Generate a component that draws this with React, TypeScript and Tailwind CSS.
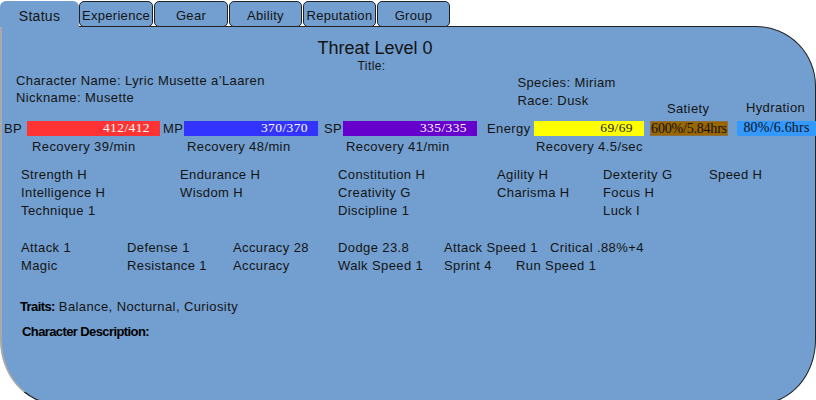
import React from "react";

function Tab({ label, w, ml }: { label: string; w: string; ml: string }) {
  return (
    <div
      className={`${w} ${ml} h-[26px] rounded-[5px] border border-[#222] bg-[#729fcf] pt-[6px] text-center text-[13px] leading-[16px] tracking-[0.3px]`}
    >
      {label}
    </div>
  );
}

function Bar({
  w,
  bg,
  text,
  color,
  align,
  extra,
}: {
  w: string;
  bg: string;
  text: string;
  color: string;
  align: string;
  extra?: string;
}) {
  return (
    <div
      className={`${w} ${bg} ${color} ${align} ${extra ?? ""} h-[15px] shrink-0 font-['Liberation_Serif',serif] leading-[14px] whitespace-nowrap`}
    >
      {text}
    </div>
  );
}

export default function App() {
  return (
    <div className="h-[400px] w-[816px] overflow-hidden bg-white font-['Liberation_Sans',Arial,sans-serif] text-[#141414]">
      {/* tabs */}
      <div className="flex h-[27px] pt-[1px]">
        <div className="relative z-10 h-[26px] w-[79px] rounded-t-[6px] bg-[#729fcf] pt-[7px] text-center text-[14px] leading-[16px] tracking-[0.3px]">
          Status
        </div>
        <Tab label="Experience" w="w-[74px]" ml="ml-0" />
        <Tab label="Gear" w="w-[74px]" ml="ml-[1px]" />
        <Tab label="Ability" w="w-[73px]" ml="ml-[1px]" />
        <Tab label="Reputation" w="w-[73px]" ml="ml-[1px]" />
        <Tab label="Group" w="w-[73px]" ml="ml-[1px]" />
      </div>

      {/* panel */}
      <div className="-mt-[1px] h-[378px] w-[816px] rounded-tr-[60px] rounded-bl-[56px_64px] rounded-br-[56px_64px] border border-[#222] border-l-2 border-l-[#a9a9a9] bg-[#729fcf] text-[13px] tracking-[0.4px]">
        {/* threat level */}
        <div className="w-[746px] pt-[11px] text-center text-[18px] leading-[21px] tracking-normal">
          Threat Level 0
        </div>

        {/* info row */}
        <div className="flex h-[62px]">
          <div className="ml-[14px] w-[300px] pt-[13px] leading-[17px]">
            <div>Character Name: Lyric Musette a’Laaren</div>
            <div>Nickname: Musette</div>
          </div>
          <div className="w-[112px] text-center text-[12px] leading-[14px]">Title:</div>
          <div className="w-[90px]" />
          <div className="w-[132px] pt-[15px] leading-[18px]">
            <div>Species: Miriam</div>
            <div>Race: Dusk</div>
          </div>
          <div className="w-[78px] pt-[41px] text-center leading-[18px]">Satiety</div>
          <div className="w-[9px]" />
          <div className="w-[79px] pt-[40px] text-center leading-[18px]">Hydration</div>
        </div>

        {/* bars row */}
        <div className="flex h-[15px] items-center pl-[2px] leading-[15px]">
          <div className="w-[23px] shrink-0">BP</div>
          <Bar w="w-[133px]" bg="bg-[#ff3333]" text="412/412" color="text-white" align="text-right pr-[10px] text-[13.5px]" />
          <div className="w-[24px] shrink-0 pl-[3px]">MP</div>
          <Bar w="w-[134px]" bg="bg-[#3333ff]" text="370/370" color="text-white" align="text-right pr-[10px] text-[13.5px]" />
          <div className="w-[25px] shrink-0 pl-[6px]">SP</div>
          <Bar w="w-[134px]" bg="bg-[#6600cc]" text="335/335" color="text-white" align="text-right pr-[10px] text-[13.5px]" />
          <div className="w-[57px] shrink-0 pl-[10px]">Energy</div>
          <Bar w="w-[110px]" bg="bg-[#ffff00]" text="69/69" color="text-[#222]" align="text-right pr-[11px] text-[13.5px]" />
          <div className="w-[6px] shrink-0" />
          <Bar
            w="w-[78px]"
            bg="bg-[#996600]"
            text="600%/5.84hrs"
            color="text-[#111]"
            align="text-center text-[14px] tracking-[-0.2px]"
            extra="border border-[#8c7040]"
          />
          <div className="w-[9px] shrink-0" />
          <Bar w="w-[79px]" bg="bg-[#3399ff]" text="80%/6.6hrs" color="text-[#111]" align="text-center text-[14px] tracking-[0.2px]" />
        </div>

        {/* recovery row */}
        <div className="mt-[2px] flex pl-[30px] leading-[18px]">
          <div className="w-[155px]">Recovery 39/min</div>
          <div className="w-[159px]">Recovery 48/min</div>
          <div className="w-[190px]">Recovery 41/min</div>
          <div>Recovery 4.5/sec</div>
        </div>

        {/* attributes */}
        <div className="mt-[10px] grid grid-cols-[159px_158px_159px_106px_106px_1fr] pl-[19px] leading-[18px]">
          <div>Strength H</div>
          <div>Endurance H</div>
          <div>Constitution H</div>
          <div>Agility H</div>
          <div>Dexterity G</div>
          <div>Speed H</div>
          <div>Intelligence H</div>
          <div>Wisdom H</div>
          <div>Creativity G</div>
          <div>Charisma H</div>
          <div>Focus H</div>
          <div />
          <div>Technique 1</div>
          <div />
          <div>Discipline 1</div>
          <div />
          <div>Luck I</div>
          <div />
        </div>

        {/* combat */}
        <div className="mt-[19px] pl-[19px] leading-[18px]">
          <div className="flex">
            <div className="w-[106px]">Attack 1</div>
            <div className="w-[106px]">Defense 1</div>
            <div className="w-[105px]">Accuracy 28</div>
            <div className="w-[106px]">Dodge 23.8</div>
            <div className="w-[106px]">Attack Speed 1</div>
            <div>Critical .88%+4</div>
          </div>
          <div className="flex">
            <div className="w-[106px]">Magic</div>
            <div className="w-[106px]">Resistance 1</div>
            <div className="w-[105px]">Accuracy</div>
            <div className="w-[106px]">Walk Speed 1</div>
            <div className="w-[72px]">Sprint 4</div>
            <div>Run Speed 1</div>
          </div>
        </div>

        {/* traits */}
        <div className="mt-[23px] pl-[18px] leading-[18px]">
          <span className="font-bold tracking-[-0.6px] text-black">Traits:</span> Balance, Nocturnal, Curiosity
        </div>
        <div className="mt-[7px] pl-[20px] font-bold leading-[18px] tracking-[-0.6px] text-black">
          Character Description:
        </div>
      </div>
    </div>
  );
}
